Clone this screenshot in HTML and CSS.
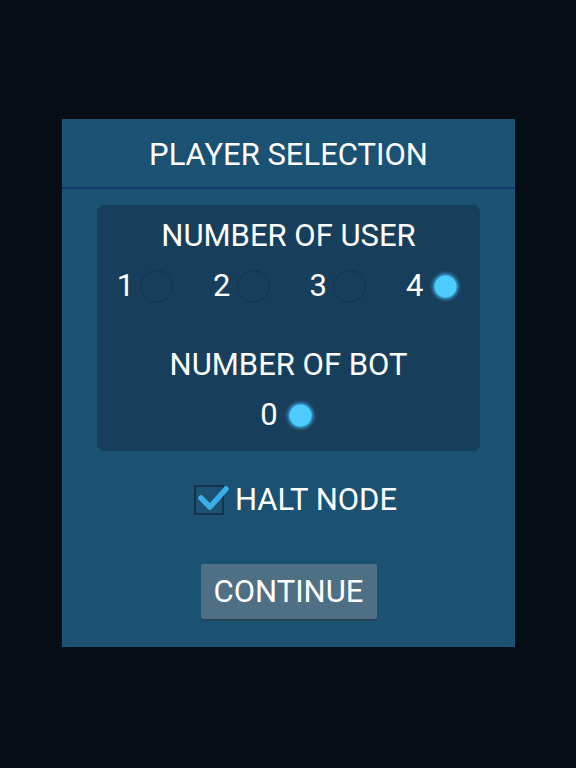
FILE: index.html
```html
<!DOCTYPE html>
<html>
<head>
<meta charset="utf-8">
<link rel="stylesheet" href="styles.css">
</head>
<body>
<div class="screen">
  <div class="panel">
    <div class="title">PLAYER SELECTION</div>
    <div class="box">
      <div class="label">NUMBER OF USER</div>
      <div class="radios users">
        <div class="opt"><span class="num">1</span><span class="radio"></span></div>
        <div class="opt"><span class="num">2</span><span class="radio"></span></div>
        <div class="opt"><span class="num">3</span><span class="radio"></span></div>
        <div class="opt"><span class="num">4</span><span class="radio on"></span></div>
      </div>
      <div class="label bot">NUMBER OF BOT</div>
      <div class="radios">
        <div class="opt"><span class="num">0</span><span class="radio on"></span></div>
      </div>
    </div>
    <div class="check-row">
      <span class="check">
        <svg class="tick" width="40" height="36" viewBox="0 0 40 36"><path d="M7 17 L16 26 L32 8" fill="none" stroke="#3aaee6" stroke-width="5.5" stroke-linecap="round" stroke-linejoin="round"/></svg>
      </span>
      <span class="check-label">HALT NODE</span>
    </div>
    <div class="btn-row"><div class="btn">CONTINUE</div></div>
  </div>
</div>
</body>
</html>
```
FILE: styles.css
```css
html, body { margin: 0; padding: 0; }
body {
  background: #060d14;
  font-family: Roboto, "Noto Sans", sans-serif;
  color: #ffffff;
  width: 576px;
  height: 768px;
}
.screen {
  padding-top: 119px;
  display: flex;
  justify-content: center;
}
.panel {
  width: 453px;
  height: 528px;
  margin-left: 1px;
  background: #1b5173;
  display: flex;
  flex-direction: column;
}
.title {
  height: 68px;
  line-height: 72px;
  text-align: center;
  font-size: 31px;
  font-weight: 400;
  border-bottom: 2px solid #0d3a66;
}
.box {
  margin: 16px 35px 0 35px;
  height: 246px;
  background: #173f5c;
  border-radius: 7px;
  display: flex;
  flex-direction: column;
  align-items: center;
}
.label {
  margin-top: 16px;
  font-size: 31px;
  font-weight: 400;
  line-height: 30px;
}
.label.bot { margin-top: 47px; }
.radios {
  display: flex;
  gap: 40px;
  margin-top: 18px;
  height: 34px;
  align-items: center;
}
.users { margin-left: 2px; }
.opt {
  display: flex;
  align-items: center;
  gap: 6px;
}
.num {
  font-size: 31px;
  font-weight: 400;
  line-height: 30px;
}
.radio {
  width: 33px;
  height: 33px;
  border-radius: 50%;
  border: 1.5px solid #123349;
  box-sizing: border-box;
  position: relative;
}
.radio.on {
  border-color: #213f55;
  background: radial-gradient(circle, #4ecbff 0 10.5px, #3590c0 11.5px, #1e5c82 13.5px, #183f5b 16px);
}
.check-row {
  margin-top: 32px;
  display: flex;
  justify-content: center;
  align-items: center;
  gap: 11px;
  height: 34px;
  margin-left: 14px;
}
.check {
  width: 30px;
  height: 30px;
  box-sizing: border-box;
  border: 2px solid #14324a;
  position: relative;
}
.tick {
  position: absolute;
  left: -2px;
  top: -6px;
}
.check-label {
  font-size: 31px;
  font-weight: 400;
  line-height: 30px;
}
.btn-row {
  margin-top: 47px;
  display: flex;
  justify-content: center;
}
.btn {
  width: 176px;
  height: 55px;
  line-height: 56px;
  text-align: center;
  background: #4f6f84;
  border-radius: 2px;
  box-shadow: 0 2px 0 #254257;
  font-size: 31px;
  font-weight: 400;
}
```
